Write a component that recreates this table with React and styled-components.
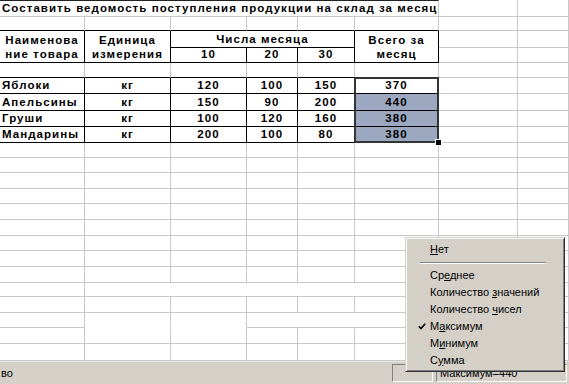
import React from "react";
import styled, { createGlobalStyle } from "styled-components";

const GRID = "#c8c8c8";
const SEL = "#9ba8c0";
const FACE = "#d4d0c8";

const COLS = [85, 86, 76, 51, 57, 84, 79, 51];
const ROWS = [17, 14, 17, 15, 15, 16, 17, 16, 16, 15, 15, 16, 15, 16, 16, 15, 16, 16, 14, 16, 15, 16, 17];

const GlobalStyle = createGlobalStyle`
  html, body { margin: 0; padding: 0; background: #fff; }
  body { font-family: "Liberation Sans", Arial, sans-serif; overflow: hidden; }
`;

const Page = styled.div`
  position: relative;
  width: 569px;
  height: 384px;
  overflow: hidden;
  display: flex;
  flex-direction: column;
`;

const Sheet = styled.div`
  display: grid;
  grid-template-columns: ${COLS.map((w) => w + "px").join(" ")};
  grid-template-rows: ${ROWS.map((h) => h + "px").join(" ")};
`;

const Cell = styled.div`
  box-sizing: border-box;
  grid-column: ${(p) => p.$c + 1} / span ${(p) => p.$cs || 1};
  grid-row: ${(p) => p.$r + 1} / span ${(p) => p.$rs || 1};
  border-right: 1px solid ${(p) => (p.$noR ? "transparent" : p.$rb ? "#000" : GRID)};
  border-bottom: 1px solid ${(p) => (p.$noB ? "transparent" : p.$bb ? "#000" : GRID)};
  border-top: ${(p) => (p.$top ? "1px solid #222" : "none")};
  background: ${(p) => (p.$sel ? SEL : "#fff")};
  display: flex;
  flex-direction: column;
  justify-content: flex-end;
  align-items: ${(p) => (p.$left ? "flex-start" : "center")};
  padding: 0 2px 1px;
  font-weight: bold;
  font-size: 11.5px;
  letter-spacing: 1.05px;
  line-height: 14px;
  color: #000;
  white-space: nowrap;
`;

const Selection = styled.div`
  grid-column: 6 / span 1;
  grid-row: 6 / span 4;
  position: relative;
  margin: -1px 0 0 -1px;
  border: 2px solid #333;
  pointer-events: none;
`;

const Handle = styled.div`
  position: absolute;
  right: -5px;
  bottom: -5px;
  width: 5px;
  height: 5px;
  background: #000;
  border: 1px solid #fff;
`;

const StatusBar = styled.div`
  flex: 1;
  display: flex;
  align-items: stretch;
  background: ${FACE};
  border-top: 1px solid #ebe9e3;
  font-size: 11px;
  color: #000;
  padding: 2px 2px 2px 0;
`;

const StatusMsg = styled.div`
  flex: 1;
  display: flex;
  align-items: center;
  padding-left: 1px;
`;

const Panel = styled.div`
  width: ${(p) => p.$w}px;
  margin-left: 3px;
  border: 1px solid;
  border-color: #808080 #fff #fff #808080;
  display: flex;
  align-items: center;
  padding-left: 3px;
`;

const Menu = styled.div`
  position: absolute;
  left: 405px;
  top: 237px;
  width: 160px;
  box-sizing: border-box;
  background: ${FACE};
  border: 1px solid;
  border-color: ${FACE} #303030 #303030 ${FACE};
  box-shadow: inset 1px 1px #fff, inset -1px -1px #808080;
  padding: 3px 2px 2px;
  font-size: 11px;
  color: #000;
`;

const Item = styled.div`
  position: relative;
  height: 17px;
  line-height: 17px;
  padding-left: 22px;
  u { text-decoration: underline; }
`;

const Check = styled.svg`
  position: absolute;
  left: 10px;
  top: 5px;
`;

const Sep = styled.div`
  height: 9px;
  display: flex;
  align-items: center;
  padding: 0 16px 0 12px;
  &::after {
    content: "";
    flex: 1;
    border-top: 1px solid #808080;
    border-bottom: 1px solid #fff;
  }
`;

const data = [
  ["Яблоки", "кг", "120", "100", "150", "370"],
  ["Апельсины", "кг", "150", "90", "200", "440"],
  ["Груши", "кг", "100", "120", "160", "380"],
  ["Мандарины", "кг", "200", "100", "80", "380"],
];

function buildCells() {
  const cells = [];
  const plain = (r, c, extra = {}) => cells.push({ r, c, ...extra });

  // title row
  cells.push({ r: 0, c: 0, cs: 6, top: true, left: true, text: "Составить ведомость поступления продукции на склад за месяц" });
  plain(0, 6);
  plain(0, 7);

  for (let c = 0; c < 8; c++) plain(1, c, { bb: c < 6 });

  const head = { rb: true, bb: true };
  cells.push({ r: 2, c: 0, rs: 2, ...head, lines: ["Наименова", "ние товара"] });
  cells.push({ r: 2, c: 1, rs: 2, ...head, lines: ["Единица", "измерения"] });
  cells.push({ r: 2, c: 2, cs: 3, ...head, text: "Числа месяца" });
  cells.push({ r: 2, c: 5, rs: 2, ...head, lines: ["Всего за", "месяц"] });
  plain(2, 6);
  plain(2, 7);
  ["10", "20", "30"].forEach((t, i) => cells.push({ r: 3, c: 2 + i, ...head, text: t }));
  plain(3, 6);
  plain(3, 7);

  for (let c = 0; c < 8; c++) plain(4, c, { bb: c < 6 });

  data.forEach((row, i) => {
    row.forEach((t, c) => {
      cells.push({ r: 5 + i, c, rb: true, bb: true, text: t, left: c === 0, sel: c === 5 && i > 0 });
    });
    plain(5 + i, 6);
    plain(5 + i, 7);
  });

  // lower empty rows, with the two strips the screen did not repaint
  for (let r = 9; r < ROWS.length; r++) {
    if (r === 18) {
      plain(r, 0);
      plain(r, 1, { cs: 7 });
    } else if (r === 20) {
      plain(r, 0);
      plain(r, 1, { noB: true });
      plain(r, 2, { noB: true });
      plain(r, 3, { cs: 5 });
    } else {
      for (let c = 0; c < 8; c++) plain(r, c);
    }
  }
  return cells;
}

const cells = buildCells();

const menuItems = [
  { pre: "", u: "Н", post: "ет" },
  "sep",
  { pre: "Ср", u: "е", post: "днее" },
  { pre: "Количество ", u: "з", post: "начений" },
  { pre: "Количество ", u: "ч", post: "исел" },
  { pre: "М", u: "а", post: "ксимум", checked: true },
  { pre: "М", u: "и", post: "нимум" },
  { pre: "С", u: "у", post: "мма" },
];

export default function App() {
  return (
    <>
      <GlobalStyle />
      <Page>
        <Sheet>
          {cells.map((k, i) => (
            <Cell
              key={i}
              $r={k.r}
              $c={k.c}
              $rs={k.rs}
              $cs={k.cs}
              $rb={k.rb}
              $bb={k.bb}
              $noB={k.noB}
              $top={k.top}
              $left={k.left}
              $sel={k.sel}
            >
              {k.lines ? k.lines.map((l) => <span key={l}>{l}</span>) : k.text}
            </Cell>
          ))}
          <Selection>
            <Handle />
          </Selection>
        </Sheet>
        <StatusBar>
          <StatusMsg>во</StatusMsg>
          <Panel $w={36} />
          <Panel $w={126}>Максимум=440</Panel>
        </StatusBar>

        <Menu>
          {menuItems.map((m, i) =>
            m === "sep" ? (
              <Sep key={i} />
            ) : (
              <Item key={i}>
                {m.checked && (
                  <Check width="8" height="7" viewBox="0 0 8 7">
                    <path d="M0.8 3.2 L3 5.6 L7.2 0.8" fill="none" stroke="#000" strokeWidth="1.6" />
                  </Check>
                )}
                {m.pre}
                <u>{m.u}</u>
                {m.post}
              </Item>
            )
          )}
        </Menu>
      </Page>
    </>
  );
}
